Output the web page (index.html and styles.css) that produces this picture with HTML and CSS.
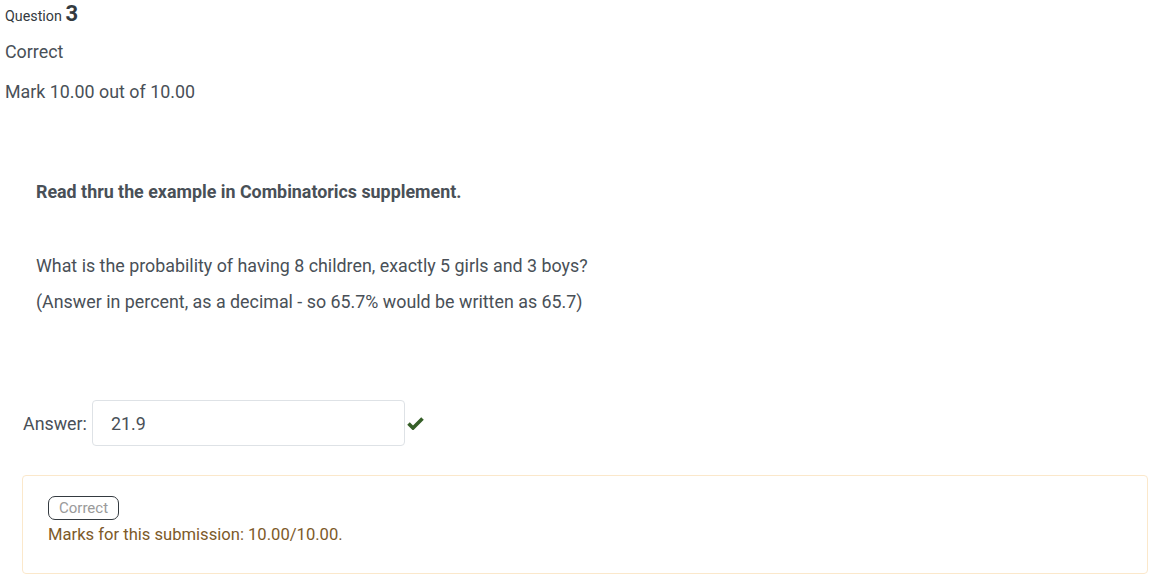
FILE: index.html
```html
<!DOCTYPE html>
<html>
<head>
<meta charset="utf-8">
<link rel="stylesheet" href="styles.css">
</head>
<body>
<div class="que">
  <div class="info">
    <h3 class="qno">Question <span class="num">3</span></h3>
    <div class="state">Correct</div>
    <div class="grade">Mark 10.00 out of 10.00</div>
  </div>
  <div class="content">
    <div class="qtext">
      <p class="lead"><strong>Read thru the example in Combinatorics supplement.</strong></p>
      <p class="line1">What is the probability of having 8 children, exactly 5 girls and 3 boys?</p>
      <p class="line2">(Answer in percent, as a decimal - so 65.7% would be written as 65.7)</p>
    </div>
    <div class="ablock">
      <label class="alabel">Answer:</label>
      <div class="answer-input">21.9</div>
      <svg class="tick" width="17" height="14" viewBox="0 0 17 14"><path d="M1.5 7.5 L6 12 L15.5 2.5" fill="none" stroke="#365f28" stroke-width="3.6" stroke-linejoin="miter"/></svg>
    </div>
    <div class="outcome">
      <span class="badge">Correct</span>
      <div class="marks">Marks for this submission: 10.00/10.00.</div>
    </div>
  </div>
</div>
</body>
</html>
```
FILE: styles.css
```css
* { box-sizing: border-box; }
body {
  margin: 0;
  font-family: Roboto, "Liberation Sans", sans-serif;
  font-size: 17.85px;
  color: #495057;
  background: #fff;
}
.que { padding: 0 9px 0 5px; }
.info { display: flex; flex-direction: column; }
.qno {
  margin: 4px 0 0;
  font-size: 14.3px;
  font-weight: 400;
  line-height: 20px;
  color: #343a40;
}
.num { font-size: 22px; font-weight: 700; }
.state { margin-top: 16px; line-height: 20px; }
.grade { margin-top: 20px; line-height: 20px; }
.content { padding: 0 0 0 17px; }
.qtext { padding: 80px 0 0 14px; }
.qtext p { margin: 0; line-height: 20px; }
.lead { margin-bottom: 54px !important; }
.line1 { margin-bottom: 16px !important; }
.ablock {
  display: flex;
  align-items: center;
  margin-top: 88px;
  padding-left: 1px;
}
.alabel { margin-right: 5px; }
.answer-input {
  width: 313px;
  height: 46px;
  border: 1px solid #dee2e6;
  border-radius: 4px;
  padding: 0 18px;
  display: flex;
  align-items: center;
  color: #495057;
}
.tick { margin-left: 2px; margin-top: 0px; }
.outcome {
  margin-top: 29px;
  border: 1px solid #fbe8cb;
  border-radius: 4px;
  padding: 20px 25px 36px;
  color: #7d5a29;
  font-size: 16.6px;
  height: 99px;
}
.badge {
  display: inline-block;
  border: 1px solid #343a40;
  border-radius: 7px;
  color: #9a9a9a;
  font-size: 15px;
  line-height: 22px;
  padding: 0 10px;
}
.marks { margin-top: 5px; line-height: 20px; }
```
